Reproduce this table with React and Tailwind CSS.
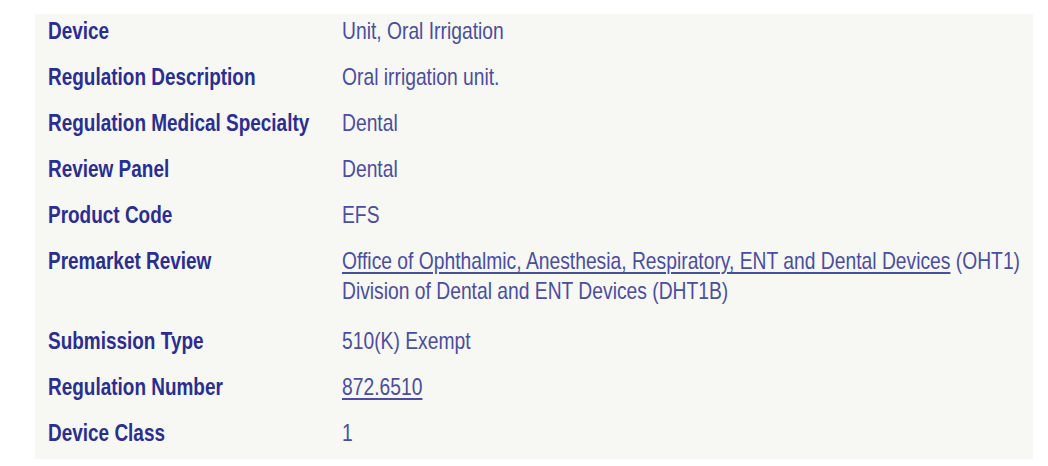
const rows = [
  { label: 'Device', value: 'Unit, Oral Irrigation' },
  { label: 'Regulation Description', value: 'Oral irrigation unit.' },
  { label: 'Regulation Medical Specialty', value: 'Dental' },
  { label: 'Review Panel', value: 'Dental' },
  { label: 'Product Code', value: 'EFS' },
  { label: 'Premarket Review', premarket: true },
  { label: 'Submission Type', value: '510(K) Exempt' },
  { label: 'Regulation Number', value: '872.6510', link: true },
  { label: 'Device Class', value: '1', last: true },
]

const font = { fontFamily: '"Liberation Sans", Arial, sans-serif' }

export default function App() {
  return (
    <div className="w-[1048px] h-[466px] bg-white pt-[14px] pl-[35px] overflow-hidden" style={font}>
      <div className="w-[998px] h-[445px] bg-[#f7f7f3] pl-[13px] overflow-hidden">
        {rows.map((r) => (
          <div
            key={r.label}
            className={`flex pt-[2px] ${r.premarket ? 'pb-[18px]' : r.last ? 'pb-[11px]' : 'pb-[14px]'}`}
          >
            <div className="w-[294px] shrink-0 text-[24px] leading-[30px] font-bold text-[#2b2e8f]">
              <span className="block origin-left scale-x-[0.79] whitespace-nowrap">{r.label}</span>
            </div>
            <div className="min-w-0 text-[24px] leading-[30px] text-[#4b4e9c] whitespace-nowrap">
              {r.premarket ? (
                <>
                  <div className="origin-left scale-x-[0.803]">
                    <a href="#" className="underline decoration-[#4b4e9c] underline-offset-[3px]">
                      Office of Ophthalmic, Anesthesia, Respiratory, ENT and Dental Devices
                    </a>{' '}
                    (OHT1)
                  </div>
                  <div className="origin-left scale-x-[0.803]">Division of Dental and ENT Devices (DHT1B)</div>
                </>
              ) : r.link ? (
                <div className="origin-left scale-x-[0.803]">
                  <a href="#" className="underline underline-offset-[3px]">{r.value}</a>
                </div>
              ) : (
                <div className="origin-left scale-x-[0.803]">{r.value}</div>
              )}
            </div>
          </div>
        ))}
      </div>
    </div>
  )
}
